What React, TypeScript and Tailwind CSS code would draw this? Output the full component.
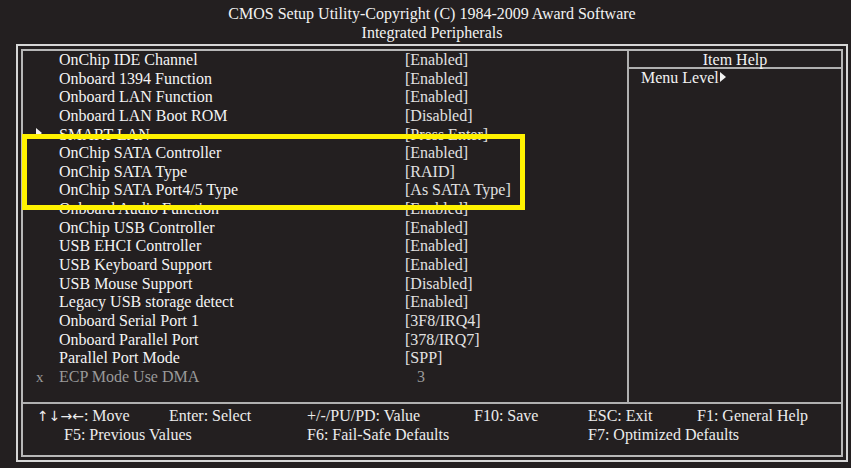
const rows: { label: string; value: string; mark?: "arrow" | "x" }[] = [
  { label: "OnChip IDE Channel", value: "[Enabled]" },
  { label: "Onboard 1394 Function", value: "[Enabled]" },
  { label: "Onboard LAN Function", value: "[Enabled]" },
  { label: "Onboard LAN Boot ROM", value: "[Disabled]" },
  { label: "SMART LAN", value: "[Press Enter]", mark: "arrow" },
  { label: "OnChip SATA Controller", value: "[Enabled]" },
  { label: "OnChip SATA Type", value: "[RAID]" },
  { label: "OnChip SATA Port4/5 Type", value: "[As SATA Type]" },
  { label: "Onboard Audio Function", value: "[Enabled]" },
  { label: "OnChip USB Controller", value: "[Enabled]" },
  { label: "USB EHCI Controller", value: "[Enabled]" },
  { label: "USB Keyboard Support", value: "[Enabled]" },
  { label: "USB Mouse Support", value: "[Disabled]" },
  { label: "Legacy USB storage detect", value: "[Enabled]" },
  { label: "Onboard Serial Port 1", value: "[3F8/IRQ4]" },
  { label: "Onboard Parallel Port", value: "[378/IRQ7]" },
  { label: "Parallel Port Mode", value: "[SPP]" },
  { label: "ECP Mode Use DMA", value: "3", mark: "x" },
];

const Triangle = () => (
  <svg width="6" height="10" viewBox="0 0 6 10" className="block">
    <path d="M0 0 L6 5 L0 10 Z" fill="#f2f2f2" />
  </svg>
);

const App = () => {
  return (
    <div className="relative w-[851px] h-[468px] overflow-hidden bg-[#231f20] text-[16px] text-[#f2f2f2] font-['Liberation_Serif','Times_New_Roman',serif]">
      {/* 標題 */}
      <div className="h-[44px] pl-[16px] w-[848px] pt-[4px] text-center leading-[19px]">
        <div>CMOS Setup Utility-Copyright (C) 1984-2009 Award Software</div>
        <div>Integrated Peripherals</div>
      </div>

      {/* 外框 */}
      <div className="ml-[16px] w-[832px] h-[418px] border-2 border-[#d6d6d6] p-[3px]">
        <div className="w-full h-full border-2 border-[#b8b8b8] flex flex-col">
          <div className="flex h-[351px]">
            {/* 選項列表 */}
            <div className="w-[604px] leading-[18.65px]">
              {rows.map((row) => (
                <div key={row.label} className="flex h-[18.65px]">
                  <div className="w-[36px] pl-[13px] flex items-center">
                    {row.mark === "arrow" && (
                      <span className="-mt-[3px]">
                        <Triangle />
                      </span>
                    )}
                    {row.mark === "x" && (
                      <span className="text-[#9a9a9a] text-[15px]">x</span>
                    )}
                  </div>
                  <div
                    className={`w-[346px] ${
                      row.mark === "x" ? "text-[#9a9a9a]" : "text-[#f4f4f4]"
                    }`}
                  >
                    {row.label}
                  </div>
                  <div
                    className={
                      row.mark === "x"
                        ? "pl-[12px] text-[#9a9a9a]"
                        : "text-[#e2e2e2]"
                    }
                  >
                    {row.value}
                  </div>
                </div>
              ))}
            </div>

            {/* Item Help */}
            <div className="w-[214px] border-l-2 border-[#b0b0b0]">
              <div className="h-[18px] border-b-2 border-[#b0b0b0] text-center leading-[18.65px]">
                Item Help
              </div>
              <div className="pl-[12px] leading-[18.65px] flex items-center">
                Menu Level
                <span className="ml-[1px] -mt-[2px]">
                  <Triangle />
                </span>
              </div>
            </div>
          </div>

          {/* 操作說明 */}
          <div className="flex-1 border-t-2 border-[#b0b0b0] pt-[3px] leading-[18.65px] text-[#ececec]">
            <div className="flex">
              <span className="w-[146px] pl-[14px] font-['DejaVu_Sans',sans-serif] text-[14px]">
                ↑↓→←<span className="font-['Liberation_Serif',serif] text-[16px]">: Move</span>
              </span>
              <span className="w-[138px]">Enter: Select</span>
              <span className="w-[167px]">+/-/PU/PD: Value</span>
              <span className="w-[114px]">F10: Save</span>
              <span className="w-[109px]">ESC: Exit</span>
              <span>F1: General Help</span>
            </div>
            <div className="flex">
              <span className="w-[284px] pl-[41px]">F5: Previous Values</span>
              <span className="w-[281px]">F6: Fail-Safe Defaults</span>
              <span>F7: Optimized Defaults</span>
            </div>
          </div>
        </div>
      </div>

      {/* 黃色標示框 */}
      <div className="absolute left-[22px] top-[134px] w-[503px] h-[76px] border-[5px] border-[#fff200]" />
    </div>
  );
};

export default App;
